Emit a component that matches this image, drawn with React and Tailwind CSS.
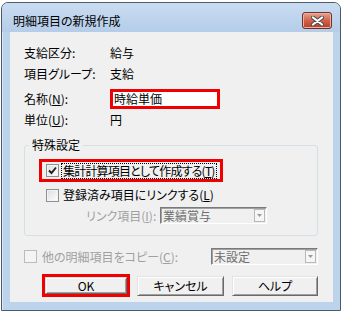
const font = "font-['Noto_Sans_CJK_JP','Noto_Sans',sans-serif] [font-feature-settings:'palt']";

const U = ({ children }) => (
  <span className="underline underline-offset-[1px] decoration-[1px]">{children}</span>
);

const CheckBox = ({ checked = false, disabled = false }) => (
  <div
    className={`w-[13px] h-[13px] shrink-0 border flex items-center justify-center ${
      disabled
        ? "border-[#bcbcbc] bg-[#f4f4f4]"
        : "border-[#8e8f8f] bg-gradient-to-br from-[#dcdcdc] to-white shadow-[inset_0_0_0_1px_#f4f4f4]"
    }`}
  >
    {checked && (
      <svg width="9" height="9" viewBox="0 0 9 9">
        <path d="M1 4.5 L3.5 7 L8 1.5" fill="none" stroke="#1e1e1e" strokeWidth="1.9" />
      </svg>
    )}
  </div>
);

const Combo = ({ value, width }) => (
  <div
    className={`${width} h-[17px] shrink-0 flex items-center justify-between bg-[#f0f0f0] border border-t-[#7a7a7a] border-l-[#7a7a7a] border-r-white border-b-white shadow-[inset_1px_1px_0_#a0a0a0] pl-[2px] pr-[1px]`}
  >
    <span className="text-[12px] leading-[15px] text-[#6d6d6d] whitespace-nowrap">{value}</span>
    <div className="w-[11px] h-[13px] border border-[#b8b8b8] bg-[#f6f6f6] flex items-center justify-center">
      <svg width="5" height="3" viewBox="0 0 5 3">
        <path d="M0 0 H5 L2.5 3 Z" fill="#9a9a9a" />
      </svg>
    </div>
  </div>
);

const Button = ({ children, className = "" }) => (
  <div
    className={`flex items-center justify-center text-[12px] text-black bg-[#f0f0f0] border border-t-[#e3e3e3] border-l-[#e3e3e3] border-r-[#696969] border-b-[#696969] shadow-[inset_1px_1px_0_#fff,inset_-1px_-1px_0_#a0a0a0] whitespace-nowrap ${className}`}
  >
    {children}
  </div>
);

export default function App() {
  return (
    <div className={`w-[343px] h-[313px] bg-white pt-[2px] pl-[1px] whitespace-nowrap ${font}`}>
      <div className="w-[340px] h-[309px] border border-[#4d5a68] rounded-t-[7px] bg-[#bcd3ec] shadow-[inset_1px_1px_0_#dbe8f6] flex flex-col">
        {/* TITLE BAR */}
        <div className="h-[29px] shrink-0 flex items-start justify-between pt-[9px] pl-[11px] pr-[8px] rounded-t-[6px] bg-gradient-to-b from-[#c9dcf1] to-[#b5cde9]">
          <span className="text-[12px] leading-[17px] text-black">明細項目の新規作成</span>
          <div className="w-[30px] h-[17px] rounded-[3px] border border-[#6e3028] bg-gradient-to-b from-[#e4a392] via-[#cf634d] to-[#bd3a22] shadow-[inset_0_0_0_1px_#eab3a6] flex items-center justify-center">
            <svg width="13" height="10" viewBox="0 0 13 10">
              <path d="M2 1.5 L11 8.5 M11 1.5 L2 8.5" stroke="#4a4a4a" strokeWidth="4" strokeLinecap="round" />
              <path d="M2 1.5 L11 8.5 M11 1.5 L2 8.5" stroke="#ffffff" strokeWidth="2.2" strokeLinecap="round" />
            </svg>
          </div>
        </div>

        {/* CLIENT */}
        <div className="ml-[8px] w-[323px] h-[270px] bg-[#f0f0f0] text-[12px] text-black pt-[10px] pl-[14px]">
          <div className="h-[21px] flex items-center">
            <span className="w-[86px]">支給区分:</span>
            <span>給与</span>
          </div>
          <div className="h-[21px] flex items-center">
            <span className="w-[86px]">項目グループ:</span>
            <span>支給</span>
          </div>
          <div className="mt-[5px] h-[20px] flex items-center">
            <span className="w-[86px]">
              名称(<U>N</U>):
            </span>
            <div className="w-[110px] h-[20px] border-[3px] border-[#f00000] bg-white flex items-center pl-[1px]">
              <span className="leading-[14px]">時給単価</span>
            </div>
          </div>
          <div className="h-[22px] flex items-center">
            <span className="w-[86px]">
              単位(<U>U</U>):
            </span>
            <span>円</span>
          </div>

          {/* GROUP */}
          <fieldset className="mt-[7px] w-[294px] h-[98px] border border-[#d5dfe5] rounded-[3px]">
            <legend className="ml-[4px] px-[3px] leading-[14px]">特殊設定</legend>
            <div className="mt-[7px] ml-[14px] w-[184px] h-[23px] border-[3px] border-[#f00000] flex items-center pl-[4px]">
              <CheckBox checked />
              <span className="ml-[3px] leading-[14px] px-[1px] tracking-[-0.8px] outline outline-1 outline-dotted outline-black">
                集計計算項目として作成する(<U>T</U>)
              </span>
            </div>
            <div className="mt-[2px] ml-[21px] h-[22px] flex items-center">
              <CheckBox />
              <span className="ml-[4px]">
                登録済み項目にリンクする(<U>L</U>)
              </span>
            </div>
            <div className="mt-[1px] ml-[61px] h-[17px] flex items-center">
              <span className="w-[74px] text-[#a0a0a0]">
                リンク項目(<U>I</U>):
              </span>
              <Combo value="業績賞与" width="w-[107px]" />
            </div>
          </fieldset>

          {/* COPY ROW */}
          <div className="mt-[12px] w-[294px] h-[17px] flex items-center justify-between">
            <div className="flex items-center">
              <CheckBox disabled />
              <span className="ml-[5px] text-[#a0a0a0]">
                他の明細項目をコピー(<U>C</U>):
              </span>
            </div>
            <Combo value="未設定" width="w-[107px]" />
          </div>

          {/* BUTTONS */}
          <div className="mt-[9px] ml-[18px] flex items-center">
            <div className="w-[88px] h-[23px] border-[3px] border-[#f00000]">
              <Button className="w-full h-full">OK</Button>
            </div>
            <Button className="ml-[7px] w-[87px] h-[20px]">キャンセル</Button>
            <Button className="ml-[8px] w-[86px] h-[20px]">ヘルプ</Button>
          </div>
        </div>
      </div>
    </div>
  );
}
